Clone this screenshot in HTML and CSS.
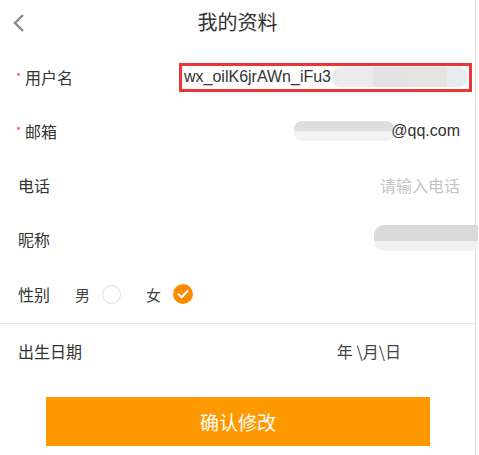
FILE: index.html
```html
<!DOCTYPE html>
<html lang="zh-CN">
<head>
<meta charset="utf-8">
<title>我的资料</title>
<link rel="stylesheet" href="styles.css">
</head>
<body>
<div class="page">
  <header class="header">
    <span class="back">
      <svg width="14" height="20" viewBox="0 0 14 20"><polyline points="11,2 3,10 11,18" fill="none" stroke="#8a8a8a" stroke-width="2.4"/></svg>
    </span>
    <h1 class="title">我的资料</h1>
  </header>
  <div class="form">
    <div class="row">
      <span class="label"><span class="req">*</span>用户名</span>
      <div class="input-box">
        <span class="input-text">wx_oilK6jrAWn_iFu3</span>
        <span class="blur blur-user"></span>
      </div>
    </div>
    <div class="row">
      <span class="label"><span class="req">*</span>邮箱</span>
      <div class="value">
        <span class="blur blur-mail"></span><span class="mail">@qq.com</span>
      </div>
    </div>
    <div class="row">
      <span class="label plain">电话</span>
      <div class="value placeholder">请输入电话</div>
    </div>
    <div class="row">
      <span class="label plain">昵称</span>
      <div class="value nick"><span class="blur blur-nick"></span></div>
    </div>
    <div class="row gender-row">
      <span class="label plain">性别</span>
      <div class="gender">
        <span class="opt">男</span>
        <span class="radio"></span>
        <span class="opt opt-f">女</span>
        <span class="radio checked">
          <svg width="20" height="20" viewBox="0 0 20 20"><polyline points="5.5,10.2 8.6,13.2 14.5,7" fill="none" stroke="#fff" stroke-width="2.2" stroke-linecap="round" stroke-linejoin="round"/></svg>
        </span>
      </div>
    </div>
    <div class="divider"></div>
    <div class="row">
      <span class="label plain">出生日期</span>
      <div class="value date">年 \月\日</div>
    </div>
    <div class="btn-wrap">
      <button class="btn">确认修改</button>
    </div>
  </div>
</div>
</body>
</html>
```
FILE: styles.css
```css
html, body {
  margin: 0;
  padding: 0;
  background: #fff;
}
body {
  font-family: "Liberation Sans", "Noto Sans CJK SC", sans-serif;
  color: #333;
}
.page {
  width: 476px;
  height: 455px;
  border-right: 1px solid #dcdcdc;
  box-sizing: border-box;
  position: relative;
}
.header {
  height: 44px;
  display: flex;
  align-items: center;
  justify-content: center;
  position: relative;
}
.back {
  position: absolute;
  left: 12px;
  top: 13px;
  width: 14px;
  height: 20px;
}
.back svg { display: block; }
.title {
  margin: 0;
  font-size: 20px;
  font-weight: normal;
  color: #333;
  line-height: 44px;
  font-family: "Noto Sans CJK SC", sans-serif;
}
.form {
  padding-top: 6px;
}
.row {
  height: 54px;
  display: flex;
  align-items: center;
  padding: 0 15px 0 16px;
}
.label {
  font-size: 16px;
  color: #333;
  display: flex;
  align-items: center;
  font-family: "Noto Sans CJK SC", sans-serif;
}
.label.plain { padding-left: 2px; }
.req {
  color: #f5445f;
  font-size: 11px;
  width: 9px;
  margin-top: -3px;
}
.input-box {
  margin-left: auto;
  margin-right: -12px;
  width: 293px;
  height: 29px;
  border: 3px solid #ee3535;
  box-sizing: border-box;
  display: flex;
  align-items: center;
  padding-left: 2px;
  overflow: hidden;
}
.input-text {
  font-size: 16px;
  color: #333;
  white-space: nowrap;
}
.blur {
  display: inline-block;
  border-radius: 8px;
}
.blur-user {
  width: 135px;
  height: 20px;
  margin-left: 1px;
  background:
    linear-gradient(90deg, #ececec 0 30%, #e3e3e3 30% 55%, #e6e4e3 55% 85%, #e9ecef 85%);
}
.value {
  margin-left: auto;
  font-size: 16px;
  color: #333;
  display: flex;
  align-items: center;
}
.blur-mail {
  width: 100px;
  height: 20px;
  margin-right: -3px;
  background:
    linear-gradient(180deg, #dedede 0 48%, #f2f2f2 48%);
}
.mail { font-size: 16px; }
.placeholder {
  color: #c4c4c4;
  font-family: "Noto Sans CJK SC", sans-serif;
}
.nick { margin-right: -18px; }
.blur-nick {
  width: 104px;
  height: 26px;
  margin-top: -2px;
  border-radius: 10px 0 0 10px;
  background:
    linear-gradient(180deg, #d9d9d9 0 60%, #f1f1f1 60%);
}
.gender-row {
  height: 56px;
}
.gender {
  display: flex;
  align-items: center;
  margin-left: 25px;
  font-family: "Noto Sans CJK SC", sans-serif;
}
.opt {
  font-size: 15px;
  color: #444;
}
.opt-f { margin-left: 25px; }
.radio {
  width: 19px;
  height: 19px;
  border: 1px solid #dcdcdc;
  border-radius: 50%;
  box-sizing: border-box;
  margin-left: 12px;
}
.radio.checked {
  width: 20px;
  height: 20px;
  border: none;
  background: #fb8c00;
}
.radio svg { display: block; }
.divider {
  height: 1px;
  background: #e3e3e3;
  margin-top: 1px;
}
.date {
  margin-right: 59px;
  font-family: "Noto Sans CJK SC", sans-serif;
  color: #444;
}
.btn-wrap {
  padding: 19px 0 0 46px;
}
.btn {
  width: 384px;
  height: 49px;
  border: none;
  background: #ff9900;
  color: #fff;
  font-size: 19px;
  font-family: "Noto Sans CJK SC", sans-serif;
  padding: 0;
  display: block;
}
```
